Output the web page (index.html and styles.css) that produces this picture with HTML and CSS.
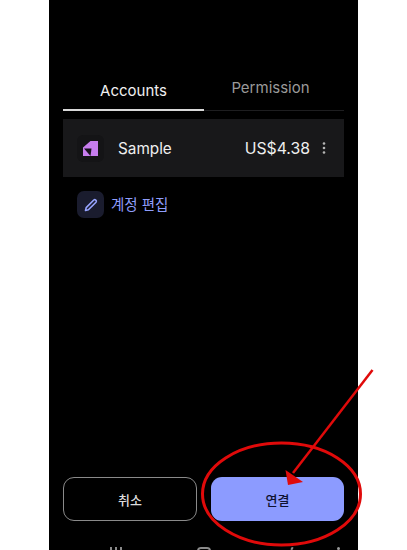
FILE: index.html
```html
<!DOCTYPE html>
<html lang="ko">
<head>
<meta charset="utf-8">
<title>Connect</title>
<link rel="stylesheet" href="styles.css">
</head>
<body>
<main class="phone">
  <nav class="tabs">
    <div class="tab tab-active">Accounts</div>
    <div class="tab tab-idle">Permission</div>
  </nav>
  <section class="account">
    <span class="icon-box">
      <svg class="logo" viewBox="0 0 15 15" width="15" height="15"><path d="M0 6.5 L7.5 0 H15 V15 H0 Z" fill="#c77dee"/><path d="M1 7.5 H8.5 L7.5 15 Z" fill="#17121c"/></svg>
    </span>
    <span class="name">Sample</span>
    <span class="balance">US$4.38</span>
    <svg class="more" viewBox="0 0 4 14" width="4" height="14"><circle cx="2" cy="2.5" r="1.3"/><circle cx="2" cy="7" r="1.3"/><circle cx="2" cy="11.5" r="1.3"/></svg>
  </section>
  <div class="edit">
    <span class="edit-box">
      <svg viewBox="0 0 16 16" width="16" height="16" fill="none" stroke="#97a4ff" stroke-width="1.6" stroke-linejoin="round"><path d="M2.5 13.5 L3.2 10.6 L10.8 3 Q11.8 2.2 12.6 3 L13 3.4 Q13.8 4.2 13 5.2 L5.4 12.8 Z"/></svg>
    </span>
    <span class="edit-label">계정 편집</span>
  </div>
  <div class="spacer"></div>
  <div class="actions">
    <button class="btn btn-cancel">취소</button>
    <button class="btn btn-connect">연결</button>
  </div>
  <div class="navbar">
    <span class="nav-lines"><i></i><i></i><i></i></span>
    <span class="nav-home"></span>
    <span class="nav-back"></span>
    <span class="nav-person"></span>
  </div>
</main>
<svg class="markup" viewBox="0 0 407 550" width="407" height="550" fill="none">
  <ellipse cx="281.5" cy="494" rx="79" ry="51" stroke="#e00a0a" stroke-width="3"/>
  <path d="M372.5 370 L293 473" stroke="#e00a0a" stroke-width="2.5"/>
  <path d="M285.5 470 L303 482 L288 485 Z" fill="#e00a0a"/>
</svg>
</body>
</html>
```
FILE: styles.css
```css
* { box-sizing: border-box; }
html, body { margin: 0; height: 550px; overflow: hidden; background: #fff; }
body { position: relative; font-family: Inter, "Noto Sans CJK KR", sans-serif; }
.phone {
  width: 309px; height: 550px; margin-left: 49px; padding: 0 14px 0 14px;
  background: #000; display: flex; flex-direction: column; overflow: hidden;
}
.tabs { display: flex; height: 42px; margin-top: 69px; border-bottom: 1px solid #1e1e20; }
.tab { text-align: center; font-size: 15px; }
.tab-active { flex: 0 0 141px; color: #f0f0f0; padding-top: 12px; border-bottom: 2px solid #d8d8d8; height: 42px; }
.tab-idle { flex: 1 1 0; color: #9a9a9a; padding: 9px 7px 0 0; }
.account {
  margin-top: 8px; height: 58px; background: #18181a; display: flex; align-items: center;
  padding: 0 18px 0 14px;
}
.icon-box { width: 27px; height: 27px; border-radius: 6px; background: #141416; display: flex; align-items: center; justify-content: center; }
.name { margin-left: 14px; color: #efefef; font-size: 15.3px; flex: 1; }
.balance { color: #efefef; font-size: 15.8px; margin-right: 12px; }
.more { fill: #b5b5b5; }
.edit { margin: 14px 0 0 14px; display: flex; align-items: center; gap: 7px; }
.edit-box { width: 27px; height: 27px; border-radius: 7px; background: #1a1c2e; display: flex; align-items: center; justify-content: center; }
.edit-label { color: #8f9dfb; font-size: 14.5px; position: relative; top: -1px; }
.spacer { flex: 1; }
.actions { display: flex; gap: 14px; margin-bottom: 26px; }
.btn { height: 44px; border-radius: 11px; font-family: inherit; font-size: 13px; font-weight: 500; }
.btn-cancel { flex: 0 0 134px; background: #000; border: 1px solid #8a8a8a; color: #dcdcdc; }
.btn-connect { flex: 1 1 0; background: #8c9bff; border: 0; color: #0f1230; }
.navbar { height: 3px; position: relative; display: flex; }
.nav-lines { position: absolute; left: 47px; top: 0; display: flex; gap: 3px; }
.nav-lines i { width: 2px; height: 3px; background: #8a8a8a; }
.nav-home { position: absolute; left: 134px; top: 0; width: 14px; height: 8px; border: 2px solid #8a8a8a; border-radius: 5px; }
.nav-back { position: absolute; left: 228px; top: 0; width: 2px; height: 3px; background: #8a8a8a; transform: rotate(30deg); }
.nav-person { position: absolute; left: 274px; top: 0; width: 3px; height: 3px; border-radius: 50%; background: #9a9a9a; }
.markup { position: absolute; left: 0; top: 0; pointer-events: none; }
```
